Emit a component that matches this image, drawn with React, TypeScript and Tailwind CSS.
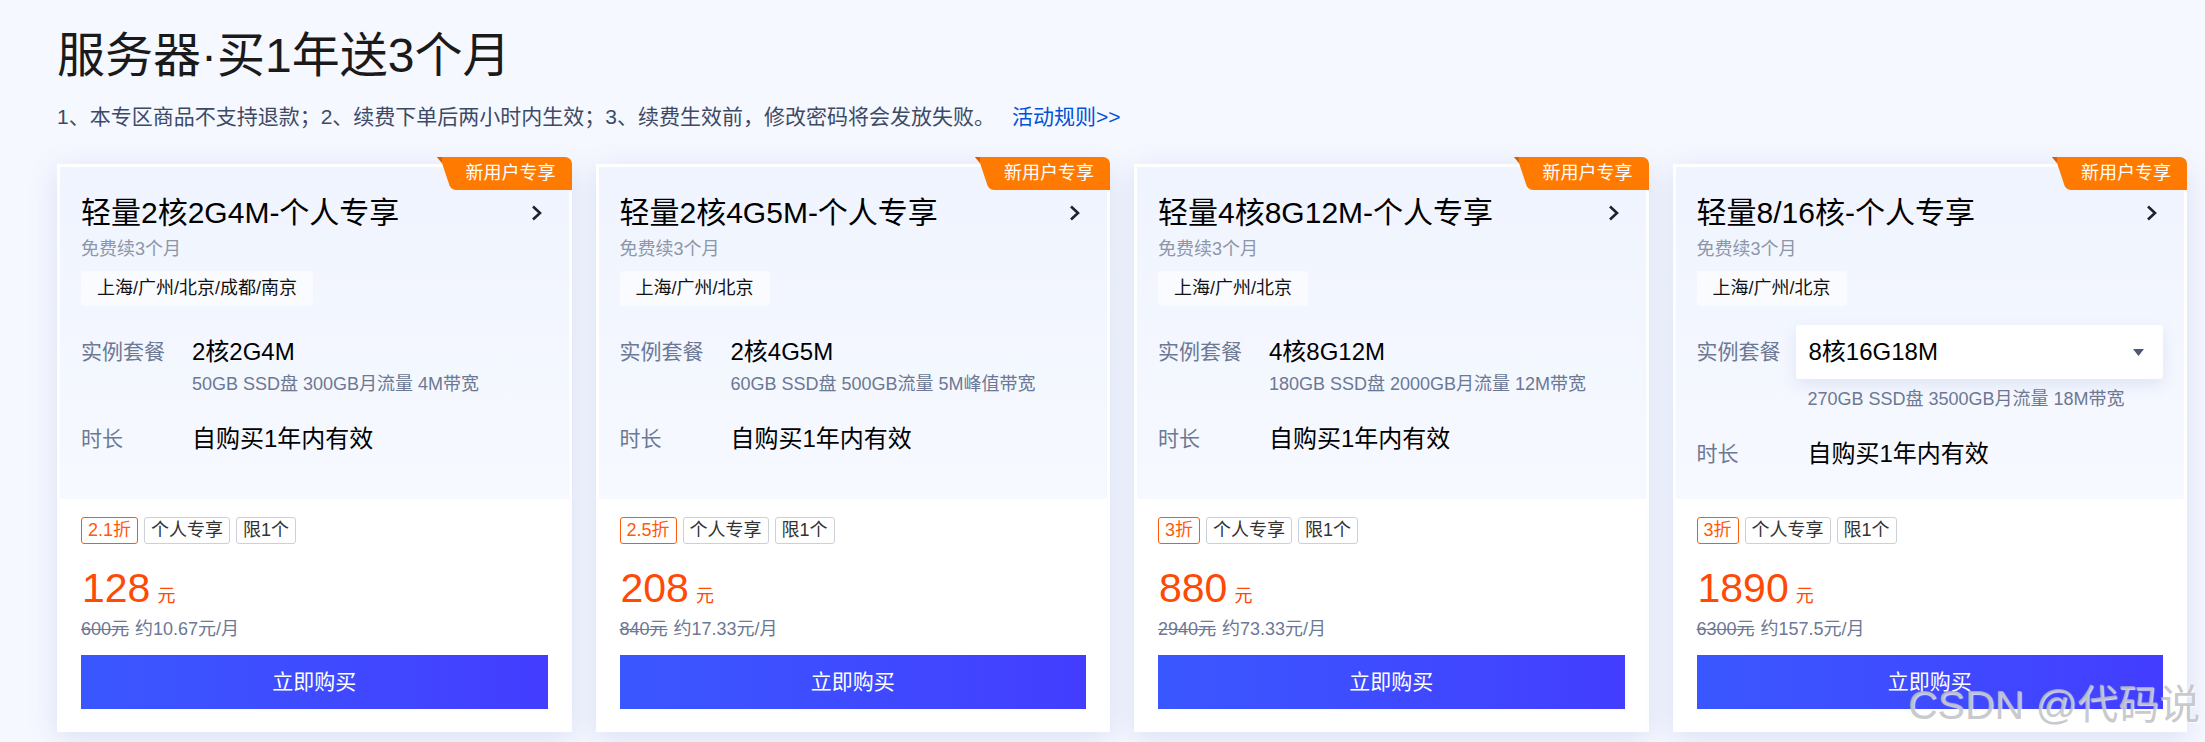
const plans = [
  { title: '轻量2核2G4M-个人专享', region: '上海/广州/北京/成都/南京', spec: '2核2G4M', desc: '50GB SSD盘 300GB月流量 4M带宽', off: '2.1折', price: '128', old: '600元', month: '约10.67元/月', select: false },
  { title: '轻量2核4G5M-个人专享', region: '上海/广州/北京', spec: '2核4G5M', desc: '60GB SSD盘 500GB流量 5M峰值带宽', off: '2.5折', price: '208', old: '840元', month: '约17.33元/月', select: false },
  { title: '轻量4核8G12M-个人专享', region: '上海/广州/北京', spec: '4核8G12M', desc: '180GB SSD盘 2000GB月流量 12M带宽', off: '3折', price: '880', old: '2940元', month: '约73.33元/月', select: false },
  { title: '轻量8/16核-个人专享', region: '上海/广州/北京', spec: '8核16G18M', desc: '270GB SSD盘 3500GB月流量 18M带宽', off: '3折', price: '1890', old: '6300元', month: '约157.5元/月', select: true },
];

function Badge() {
  return (
    <div className="absolute right-[-3px] top-[-10px] h-[33px] w-[135px]">
      <svg className="absolute inset-0" width="135" height="33" viewBox="0 0 135 33">
        <path d="M0 0H128a7 7 0 0 1 7 7V33H19a7 7 0 0 1-7-6L5 6Z" fill="#ff7a00" />
        <path d="M0 0H5V6Z" fill="#d95f00" />
      </svg>
      <div className="absolute inset-0 flex items-center justify-end pr-[16px] text-[18px] leading-[33px] text-white">新用户专享</div>
    </div>
  );
}

function Card({ p }: { p: (typeof plans)[number] }) {
  return (
    <div className="relative flex-1 border-[3px] border-white bg-white shadow-[0_6px_28px_rgba(70,100,180,0.16)]">
      <Badge />
      <div className="h-[332px] bg-gradient-to-b from-[#f0f4fe] to-[#f6f9ff] px-[21px] pt-[26px]">
        <div className="flex h-[40px] items-center justify-between">
          <div className="text-[30px] leading-[40px] text-black">{p.title}</div>
          <svg className="mr-[5px]" width="12" height="16" viewBox="0 0 12 16" fill="none">
            <path d="M2 1.5L9 8L2 14.5" stroke="#1d2230" strokeWidth="2.6" />
          </svg>
        </div>
        <div className="mt-[4px] text-[18px] leading-[24px] text-[#8d96a8]">免费续3个月</div>
        <div className="mt-[10px] flex">
          <div className="h-[35px] rounded-[3px] bg-[#fafbff] px-[16px] text-[18px] leading-[35px] text-[#111]">{p.region}</div>
        </div>
        <div className={p.select ? 'mt-[19px] flex h-[54px] items-center' : 'mt-[28px] flex h-[36px] items-center'}>
          <div className="w-[99px] shrink-0 text-[21px] leading-[36px] text-[#6c7894]">实例套餐</div>
          {p.select ? (
            <div className="flex h-[54px] flex-1 items-center justify-between rounded-[3px] bg-white pl-[13px] pr-[19px] shadow-[0_6px_16px_rgba(70,100,180,0.12)]">
              <div className="text-[24px] leading-[36px] text-black">{p.spec}</div>
              <svg width="11" height="7" viewBox="0 0 11 7">
                <path d="M0 0H11L5.5 7Z" fill="#4b5876" />
              </svg>
            </div>
          ) : (
            <div className="pl-[12px] text-[24px] leading-[36px] text-black">{p.spec}</div>
          )}
        </div>
        <div className={p.select ? 'mt-[7px] pl-[111px] text-[18px] leading-[26px] text-[#6c7894]' : 'mt-[1px] pl-[111px] text-[18px] leading-[26px] text-[#6c7894]'}>{p.desc}</div>
        <div className="mt-[24px] flex h-[36px] items-center">
          <div className="w-[99px] shrink-0 text-[21px] leading-[36px] text-[#6c7894]">时长</div>
          <div className="pl-[12px] text-[24px] leading-[36px] text-black">自购买1年内有效</div>
        </div>
      </div>
      <div className="px-[21px] pt-[18px] pb-[20px]">
        <div className="flex gap-[6px]">
          <div className="h-[27px] rounded-[3px] border border-[#ff5a0a] px-[6px] text-[18px] leading-[25px] text-[#ff5a0a]">{p.off}</div>
          <div className="h-[27px] rounded-[3px] border border-[#cdd0d6] px-[6px] text-[18px] leading-[25px] text-[#333]">个人专享</div>
          <div className="h-[27px] rounded-[3px] border border-[#cdd0d6] px-[6px] text-[18px] leading-[25px] text-[#333]">限1个</div>
        </div>
        <div className="mt-[20px] flex h-[48px] items-baseline text-[#ff4a05]">
          <span className="pl-[1px] text-[41px] leading-[48px]">{p.price}</span>
          <span className="ml-[7px] text-[18px] leading-[24px]">元</span>
        </div>
        <div className="mt-[5px] flex gap-[6px] text-[18px] leading-[24px] text-[#6c7894]">
          <span className="line-through">{p.old}</span>
          <span>{p.month}</span>
        </div>
        <div className="mt-[14px] flex h-[54px] items-center justify-center bg-gradient-to-r from-[#3a57ff] to-[#433dff] text-[21px] text-white">立即购买</div>
      </div>
    </div>
  );
}

export default function App() {
  return (
    <div className="relative h-[742px] w-[2205px] overflow-hidden bg-[#f6f8ff] pl-[57px] font-['Liberation_Sans','Noto_Sans_CJK_SC',sans-serif]">
      <h1 className="pt-[25px] text-[48px] leading-[62px] font-normal text-[#1a1a1a]">服务器·买1年送3个月</h1>
      <div className="mt-[18px] flex h-[24px] items-center text-[21px] leading-[24px] text-[#3d4a66]">
        <span>1、本专区商品不支持退款；2、续费下单后两小时内生效；3、续费生效前，修改密码将会发放失败。</span>
        <span className="ml-[17px] text-[#0052d9]">活动规则&gt;&gt;</span>
      </div>
      <div className="mt-[35px] flex w-[2130px] gap-[24px]">
        {plans.map((p) => (
          <Card key={p.title} p={p} />
        ))}
      </div>
      <div className="absolute left-[1908px] top-[681px] text-[41px] leading-[48px] whitespace-nowrap text-[#b9bcc2]/80 [text-shadow:1px_1px_1px_rgba(255,255,255,0.8)]">CSDN @代码说</div>
    </div>
  );
}
